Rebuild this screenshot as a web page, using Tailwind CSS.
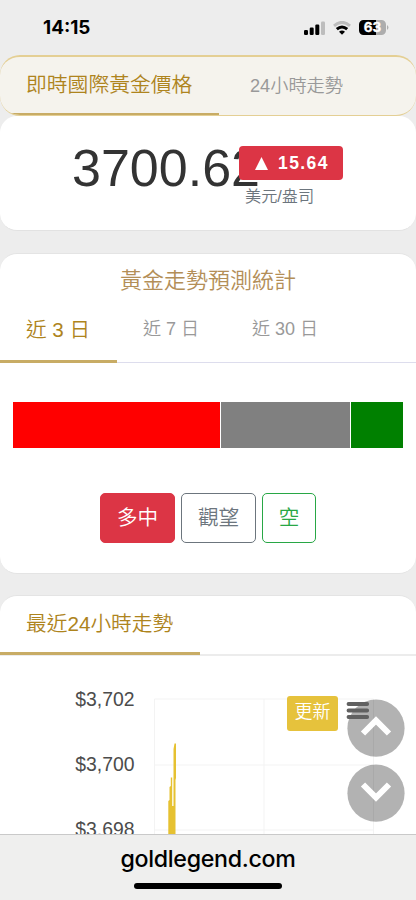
<!DOCTYPE html>
<html lang="zh-Hant">
<head>
<meta charset="utf-8">
<meta name="viewport" content="width=device-width, initial-scale=1">
<title>goldlegend.com</title>
<script src="https://cdn.jsdelivr.net/npm/@tailwindcss/browser@4"></script>
</head>
<body class="bg-[#ededed]">
<div class="relative flex h-[900px] w-[416px] flex-col overflow-hidden bg-[#ededed] font-['Liberation_Sans','Noto_Sans_CJK_TC',sans-serif] font-[350]">
  <!-- status bar -->
  <header class="flex h-[55px] shrink-0 items-center justify-between pl-[43px] pr-[27px] text-black">
    <span class="pt-px font-[Inter,sans-serif] text-[18.900px] leading-none font-bold">14:15</span>
    <div class="flex items-center gap-[8px]">
      <svg class="h-[14px] w-[21px]" viewBox="0 0 21 14"><rect x="0" y="9" width="4" height="5" rx="1.2"/><rect x="5.7" y="6.5" width="4" height="7.5" rx="1.2"/><rect x="11.3" y="3.5" width="4" height="10.5" rx="1.2"/><rect x="17" y="0.5" width="4" height="13.500" rx="1.2" fill="#bdbdbd"/></svg>
      <svg class="h-[14px] w-[18px]" viewBox="0 0 18 14" fill="none"><path d="M1 4.800Q9-2 17 4.800" stroke="#bdbdbd" stroke-width="3"/><path d="M3.800 8.200Q9 3.700 14.200 8.200" stroke="#000" stroke-width="3"/><path d="M6 10.800Q9 8.300 12 10.800L9 13.700Z" fill="#000"/></svg>
      <svg class="h-[15px] w-[30px]" viewBox="0 0 30 15"><path d="M4.500 0H17V15H4.500A4.500 4.500 0 0 1 0 10.500V4.500A4.500 4.500 0 0 1 4.500 0Z"/><path d="M17 0H22.500A4.500 4.500 0 0 1 27 4.500V10.500A4.500 4.500 0 0 1 22.500 15H17ZM28 5Q31 7.500 28 10Z" fill="#adadad"/><text x="13.500" y="12.300" text-anchor="middle" fill="#fff" stroke="#fff" stroke-width=".3" font-family="Inter" font-size="13.500" font-weight="700">63</text></svg>
    </div>
  </header>

  <nav class="flex h-[61px] shrink-0 overflow-hidden rounded-[20px] border-t-2 border-b border-[#e4cf94] bg-[#f5f3ed]">
    <div class="w-[219px] border-b-2 border-[#c8ac65] pt-[13px] pl-[26px] text-[20.8px] leading-[30px] text-[#ae841d]">即時國際黃金價格</div>
    <div class="pt-[15px] pl-[31px] text-[18.2px] leading-[28px] text-[#999]">24小時走勢</div>
  </nav>

  <section class="flex h-[115px] shrink-0 rounded-[17px] border-b border-[#e2e2e2] bg-white pt-[30px] pl-[72px]">
    <div class="w-[167px] text-[52px] leading-[44px] whitespace-nowrap text-[#333]">3700.62</div>
    <div class="relative">
      <div class="flex h-[34px] w-[104px] items-center rounded-[4px] bg-[#dc3545] pl-[16px] text-white">
        <svg class="h-[13px] w-[13px]" viewBox="0 0 13 13" fill="currentColor"><path d="M6.500 0L13 13H0Z"/></svg>
        <span class="ml-[10px] pt-[2px] text-[17.500px] leading-none font-bold tracking-[1.4px]">15.64</span>
      </div>
      <div class="pt-[4px] pl-[6px] text-[16.200px] leading-[24px] text-[#6c757d]">美元/盎司</div>
    </div>
  </section>

  <section class="mt-[22px] flex h-[321px] shrink-0 flex-col rounded-[17px] border-y border-[#e4e4e4] bg-white">
    <h2 class="h-[42px] pt-[11px] text-center text-[22px] leading-[32px] font-[350] text-[#b38e57]">黃金走勢預測統計</h2>
    <div class="flex h-[67px] border-b border-[#dddded]">
      <div class="-mb-px w-[117px] border-b-[3px] border-[#c8ac65] pt-[19px] pl-[26px] text-[20.600px] leading-[30px] text-[#ae841d]">近 3 日</div>
      <div class="pt-[19px] pl-[26px] text-[18px] leading-[28px] text-[#999]">近 7 日</div>
      <div class="pt-[19px] pl-[53px] text-[18px] leading-[28px] text-[#999]">近 30 日</div>
    </div>
    <div class="mx-[13px] mt-[39px] flex h-[46px] gap-px">
      <div class="w-[207px] bg-[#f00]"></div>
      <div class="w-[129px] bg-[#808080]"></div>
      <div class="flex-1 bg-[#008000]"></div>
    </div>
    <div class="mt-[45px] flex h-[50px] justify-center gap-[6px] text-[20.600px] leading-[47px]">
      <div class="w-[75px] rounded-[5px] border border-[#dc3545] bg-[#dc3545] text-center text-white">多中</div>
      <div class="w-[75px] rounded-[5px] border border-[#6c757d] text-center text-[#6c757d]">觀望</div>
      <div class="w-[54px] rounded-[5px] border border-[#28a745] text-center text-[#28a745]">空</div>
    </div>
  </section>

  <section class="mt-[21px] flex h-[239px] shrink-0 flex-col overflow-hidden rounded-t-[17px] border-t border-[#e4e4e4] bg-white">
    <div class="flex h-[61px] border-b-2 border-[#ececec]">
      <div class="-mb-px w-[200px] border-b-[3px] border-[#c8ac65] pt-[13px] pl-[26px] text-[20.700px] leading-[30px] text-[#ae841d]">最近24小時走勢</div>
    </div>
    <div class="relative flex h-[178px] shrink-0">
      <div class="w-[134.500px] pt-[30px] text-right text-[19.400px] leading-[26px] text-[#4c4c4c]">
        <div class="mb-[39px]">$3,702</div>
        <div class="mb-[39px]">$3,700</div>
        <div>$3,698</div>
      </div>
      <svg class="h-[178px] w-[281.500px]" viewBox="134.500 656 281.500 178">
        <path d="M154 699H373M154 765H373M154 830H373M154 699V834M263.500 699V834M373 699V834" fill="none" stroke="#f3f3f3"/>
        <path d="M167.800 834V801L169 800V787L170.300 786V777.500H171.700V806L173 806V749L174 743.500H175.500V778L175 780V834Z" fill="#e6c131"/>
      </svg>
      <div class="absolute top-[40px] left-[287px] h-[35px] w-[51px] rounded-[3px] bg-[#e6c23c] text-center text-[18px] leading-[32px] text-white">更新</div>
      <svg class="absolute top-[39px] left-[340px] h-[136px] w-[70px]" viewBox="340 695 70 136">
        <g fill="#000" fill-opacity=".3"><circle cx="376" cy="728.200" r="28.600"/><circle cx="376" cy="793.200" r="28.600"/></g>
        <path d="M348.500 704H367.200M348.500 710.500H367.200M348.500 717H367.200" stroke="#616161" stroke-width="3.800" stroke-linecap="round"/>
        <g fill="none" stroke="#fff" stroke-width="6"><path d="M363 733.500L376 720.500L389 733.500"/><path d="M363 784.500L376 797.500L389 784.500"/></g>
      </svg>
    </div>
  </section>

  <footer class="flex h-[66px] shrink-0 flex-col items-center border-t border-[#c9c9c9] bg-[#efefee] pt-[9px]">
    <div class="font-[Inter,sans-serif] text-[23.200px] leading-[30px] font-medium tracking-[-0.300px] whitespace-nowrap text-black">goldlegend.com</div>
    <div class="mt-[9px] h-[6px] w-[148px] rounded-full bg-black"></div>
  </footer>
</div>
</body>
</html>
